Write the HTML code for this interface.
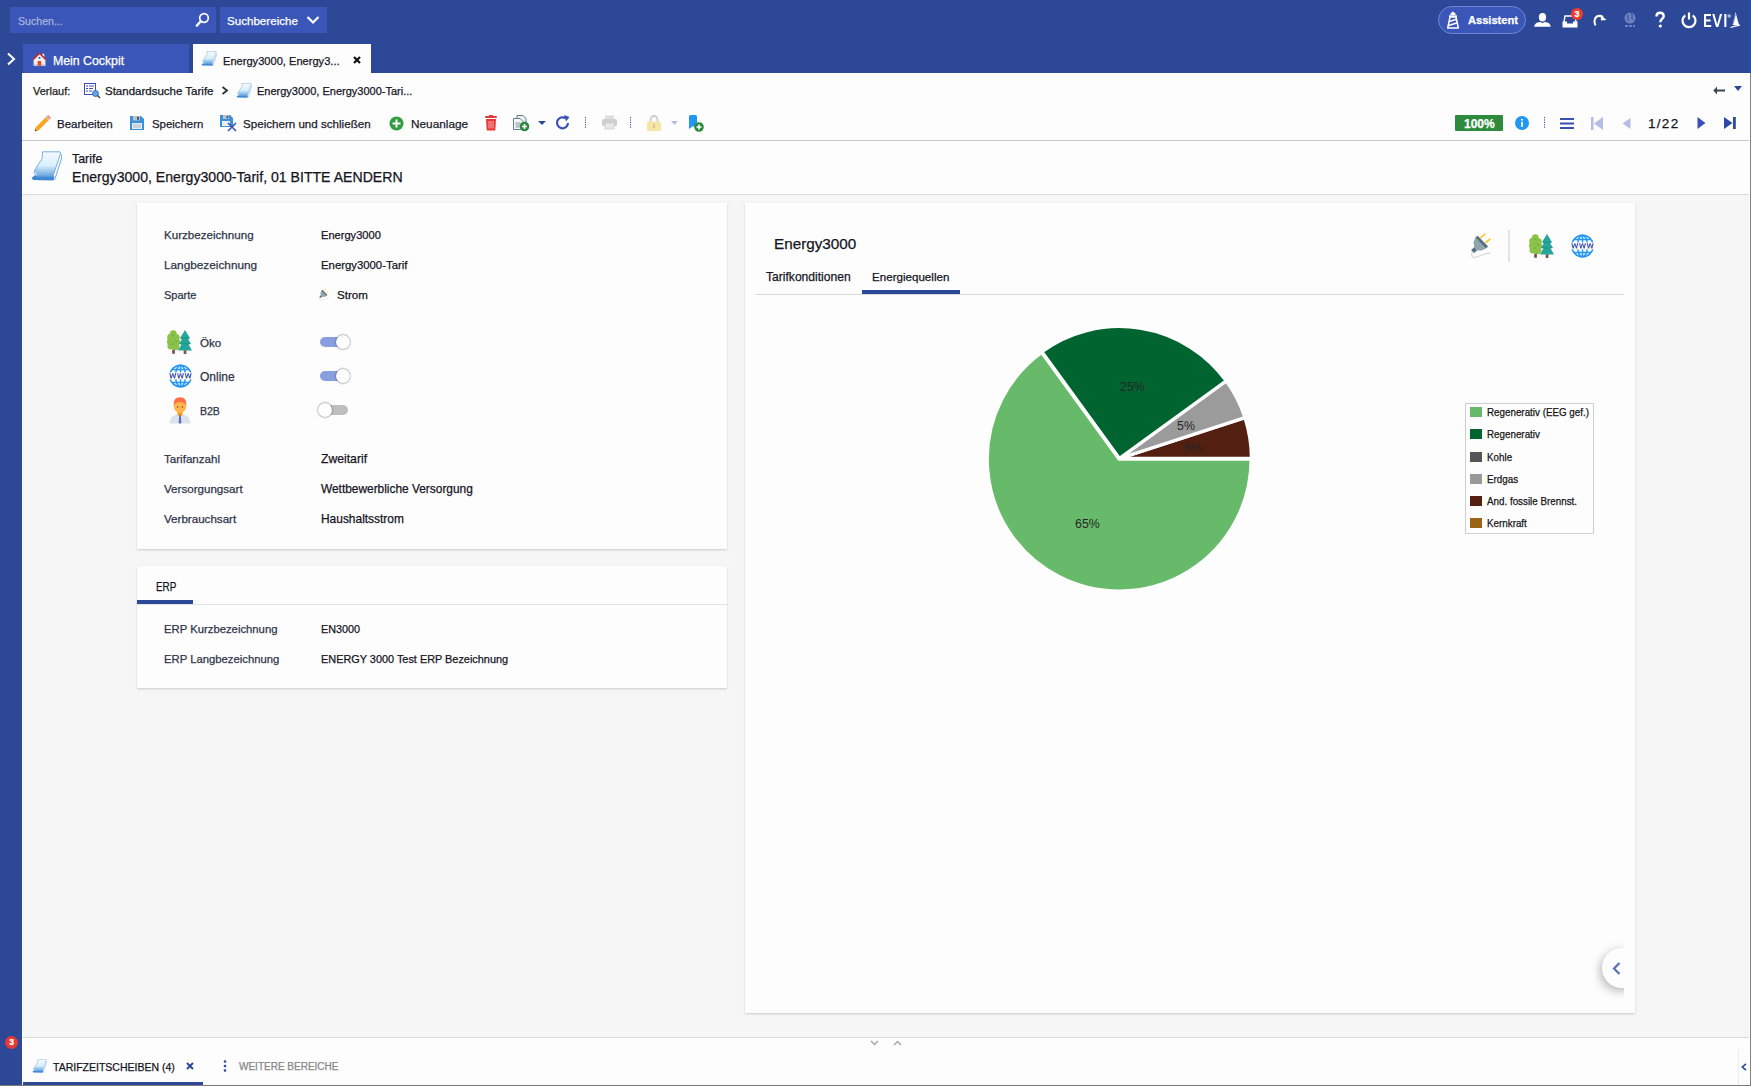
<!DOCTYPE html>
<html><head><meta charset="utf-8">
<style>
*{box-sizing:border-box;margin:0;padding:0}
html,body{width:1751px;height:1086px;overflow:hidden;background:#f6f6f6;font-family:"Liberation Sans",sans-serif;font-size:11.5px;color:#1b1b2b}
.a{position:absolute;white-space:nowrap;-webkit-text-stroke:0.25px currentColor}
svg{position:absolute;overflow:visible}
#hdr{position:absolute;left:0;top:0;width:1751px;height:73px;background:#2e4898}
#lstrip{position:absolute;left:0;top:73px;width:22px;height:1013px;background:#2e4898}
.lbl{color:#2f3549}
.val{color:#15151f}
.card{position:absolute;background:#fdfdfd;box-shadow:0 1px 2px rgba(0,0,0,0.18)}
</style></head><body>
<svg width="0" height="0" style="position:absolute;left:0;top:0"><defs>
<symbol id="trees" viewBox="0 0 25 24">
<g fill="#8bc34a"><circle cx="6.3" cy="3.6" r="3.4"/><circle cx="3.6" cy="7.2" r="3.4"/><circle cx="9.2" cy="7.4" r="3.5"/><circle cx="3.1" cy="11.6" r="3.2"/><circle cx="9.6" cy="12" r="3.5"/><circle cx="4" cy="16" r="3.6"/><circle cx="8.8" cy="16.4" r="3.6"/><circle cx="6.5" cy="10" r="4"/></g>
<path d="M5 5.5 Q6 4.5 7.2 5 M8 10 Q9.5 10.5 9.8 12 M5 15 Q5.5 13.8 7 13.6" fill="none" stroke="#689f38" stroke-width="0.9"/>
<rect x="5.2" y="19.6" width="2.7" height="4.2" fill="#795548"/>
<path d="M18 0 L23.2 8.5 H12.8 Z M18 3.5 L24 14 H12 Z M18 8 L25 20.5 H11 Z" fill="#26a69a"/>
<path d="M13.8 8.4 H22.2 M12.8 13.9 H23.2" stroke="#1e8e82" stroke-width="0.8"/>
<rect x="16.7" y="20.3" width="2.7" height="3.7" fill="#795548"/>
</symbol>
<symbol id="globe" viewBox="0 0 23 24">
<g fill="none" stroke="#2196f3" stroke-width="1.5"><circle cx="11.5" cy="12" r="10.8"/><ellipse cx="11.5" cy="12" rx="5" ry="10.8"/><path d="M11.5 1.2 V22.8 M3 5.6 H20 M3 18.4 H20"/></g>
<rect x="0" y="8.4" width="23" height="7" fill="#fdfdfd"/>
<path d="M0.3 9.2 L1.6 14.6 H2.7 L3.8 10.8 L4.9 14.6 H6 L7.3 9.2 H6.1 L5.4 12.6 L4.3 9.2 H3.3 L2.2 12.6 L1.5 9.2 Z" fill="#3f51b5" transform="translate(0,0)"/>
<path d="M0.3 9.2 L1.6 14.6 H2.7 L3.8 10.8 L4.9 14.6 H6 L7.3 9.2 H6.1 L5.4 12.6 L4.3 9.2 H3.3 L2.2 12.6 L1.5 9.2 Z" fill="#3f51b5" transform="translate(7.7,0)"/>
<path d="M0.3 9.2 L1.6 14.6 H2.7 L3.8 10.8 L4.9 14.6 H6 L7.3 9.2 H6.1 L5.4 12.6 L4.3 9.2 H3.3 L2.2 12.6 L1.5 9.2 Z" fill="#3f51b5" transform="translate(15.4,0)"/>
</symbol>
<symbol id="plug" viewBox="0 0 23 26">
<path d="M11.4 6 L16.4 1.8 M16.4 10.6 L21.4 6.8" stroke="#ffc107" stroke-width="1.5"/>
<path d="M6.4 5.6 L16.8 16.4 L12.6 18.5 L8 18.4 L5.3 15.3 L4.6 10.3 Z" fill="#90a4ae"/>
<path d="M6.4 5.6 L8.7 3.7 L19.1 14.5 L16.8 16.4 Z" fill="#546e7a"/>
<path d="M2.2 18 L5.3 15.3 L8 18.4 L4.9 21 Z" fill="#546e7a"/>
<path d="M3.4 20.4 C1.3 23.8 3.5 25.6 6.3 25.4 C9.5 25.2 14.5 21.2 21.4 20.8" fill="none" stroke="#cfd8dc" stroke-width="1.2"/>
</symbol>
<symbol id="doc" viewBox="5.5 5.5 31 30">
<defs><linearGradient id="pg2" x1="0" y1="0" x2="0" y2="1"><stop offset="0" stop-color="#f4f9ff"/><stop offset="0.55" stop-color="#d9f0fc"/><stop offset="1" stop-color="#62a0de"/></linearGradient></defs>
<path d="M35.6 9 Q36.8 10.5 36.2 12.5 L29.2 34.3" fill="none" stroke="#5b9ad6" stroke-width="0.9"/>
<path d="M6 32.4 L9.5 29.8 L28.8 30.8 L28 34.9 L7.6 34.6 Z" fill="#3f86d2"/>
<path d="M17 6.3 H34.4 Q35.4 7 34.9 8.7 L27.2 31.3 H12.6 Q10 30 9 27.2 L9.3 24.6 Q13 18.5 15.9 14.3 Q17.1 12.3 16.9 10 Z" fill="url(#pg2)" stroke="#5b9ad6" stroke-width="0.8"/>
<path d="M9.2 24.6 L12.6 31 Q9.6 30.2 8.6 27.6 Z" fill="#e9f4fd" stroke="#6aa6dc" stroke-width="0.6"/>
</symbol>
</defs></svg>
<div id="hdr"></div>
<div id="lstrip"></div>

<!-- search -->
<div class="a" style="left:10px;top:7px;width:206px;height:26px;background:#3a56b8"></div>
<div class="a" style="left:18px;top:15px;color:#a7b3dd;font-size:10.6px">Suchen...</div>
<svg style="left:194px;top:11px" width="16" height="17" viewBox="0 0 16 17"><circle cx="10" cy="7" r="4.3" fill="none" stroke="#fff" stroke-width="1.7"/><line x1="6.8" y1="10.3" x2="2.8" y2="14.6" stroke="#fff" stroke-width="2.3" stroke-linecap="round"/></svg>
<div class="a" style="left:220px;top:7px;width:107px;height:26px;background:#3a56b8"></div>
<div class="a" style="left:227px;top:14px;color:#fff;font-size:11.6px">Suchbereiche</div>
<svg style="left:306px;top:15px" width="14" height="10" viewBox="0 0 14 10"><polyline points="1.5,2 7,7.5 12.5,2" fill="none" stroke="#fff" stroke-width="2.2"/></svg>

<!-- right header icons -->
<div class="a" style="left:1438px;top:6px;width:88px;height:28px;border-radius:14px;background:#3a56b8;border:1px solid #6f86d2"></div>
<svg style="left:1447px;top:11px" width="12" height="18" viewBox="0 0 12 18"><path d="M6 0.5 L8.5 2.5 V4 H3.5 V2.5 Z" fill="#fff"/><rect x="2" y="4.3" width="8" height="1.6" fill="#fff"/><path d="M3 6 H9 L11.3 17 H0.7 Z" fill="none" stroke="#fff" stroke-width="1.5" stroke-linejoin="round"/><path d="M2.4 10.5 L9.6 8.3 M1.6 14.5 L10.4 11.8" stroke="#fff" stroke-width="1.5"/></svg>
<div class="a" style="left:1468px;top:14px;color:#fff;font-weight:bold;font-size:11.1px">Assistent</div>
<svg style="left:1534px;top:13px" width="17" height="14" viewBox="0 0 17 14"><ellipse cx="8.5" cy="4.2" rx="3.6" ry="4.2" fill="#fff"/><path d="M0.3 13.7 C0.5 10.5 3 9.5 6 9 L8.5 10 L11 9 C14 9.5 16.5 10.5 16.7 13.7 Z" fill="#fff"/></svg>
<svg style="left:1562px;top:15px" width="16" height="13" viewBox="0 0 16 13"><path d="M2 7 L3 1 H13 L14 7" fill="none" stroke="#fff" stroke-width="1.4"/><path d="M0.5 6.5 H5 V8.5 H11 V6.5 H15.5 V12.5 H0.5 Z" fill="#fff"/></svg>
<div class="a" style="left:1571px;top:8px;width:12px;height:12px;border-radius:6px;background:#f03c2e;color:#fff;font-size:9px;font-weight:bold;text-align:center;line-height:12px">3</div>
<svg style="left:1593px;top:13px" width="14" height="13" viewBox="0 0 14 13"><path d="M2.5 12.5 C0 8 2 3 6.5 2.8 C8 2.8 9 3.3 10 4" fill="none" stroke="#fff" stroke-width="2"/><path d="M7.5 1.5 L13.5 7 L8 7.5 Z" fill="#fff"/></svg>
<svg style="left:1624px;top:12px" width="12" height="16" viewBox="0 0 12 16"><circle cx="6" cy="6" r="5.5" fill="#6f80c0"/><path d="M3 2.5 Q5 4 4 6 Q3 7.5 5 9 M7 1 Q9 3 8 5 Q7 7 9 8" fill="none" stroke="#2e4898" stroke-width="1"/><path d="M1 14 H11" stroke="#6f80c0" stroke-width="2.2" stroke-dasharray="3,1"/></svg>
<svg style="left:1655px;top:12px" width="10" height="16" viewBox="0 0 10 16"><path d="M1.5 4.5 C1.5 1.8 3.3 0.8 5 0.8 C7 0.8 8.7 2 8.7 4.2 C8.7 6.8 5.3 7.2 5.3 10.2" fill="none" stroke="#fff" stroke-width="2.4"/><circle cx="5.3" cy="14" r="1.6" fill="#fff"/></svg>
<svg style="left:1681px;top:12px" width="16" height="16" viewBox="0 0 16 16"><path d="M4.3 3.3 A6.5 6.5 0 1 0 11.7 3.3" fill="none" stroke="#fff" stroke-width="2.2"/><line x1="8" y1="0.5" x2="8" y2="7.5" stroke="#fff" stroke-width="2.2"/></svg>
<svg style="left:1703.5px;top:14px" width="24" height="13" viewBox="0 0 24 13"><path d="M0 0 H7 V1.9 H2.1 V5.5 H6.6 V7.4 H2.1 V11.1 H7.2 V13 H0 Z" fill="#fff"/><path d="M8.2 0 H10.4 L13.2 10.2 L16 0 H18.2 L14.3 13 H12.1 Z" fill="#fff"/><rect x="20.3" y="0" width="2.1" height="13" fill="#fff"/></svg>
<svg style="left:1727px;top:11px" width="15" height="18" viewBox="0 0 15 18"><circle cx="2.2" cy="5" r="1.8" fill="#a9b6e4"/><path d="M8.5 1 L12 14 L5.5 14 Z" fill="#fff"/><path d="M8.5 3 L6 13 L5 14" fill="none" stroke="#2e4898" stroke-width="0.6"/><path d="M3.5 16.5 Q8 15 13 14.2" fill="none" stroke="#fff" stroke-width="1.3"/></svg>

<!-- tabs -->
<svg style="left:5px;top:52px" width="12" height="14" viewBox="0 0 12 14"><polyline points="3,1.5 9,7 3,12.5" fill="none" stroke="#fff" stroke-width="2.1"/></svg>
<div class="a" style="left:23px;top:44px;width:166px;height:29px;background:#3a56b8"></div>
<svg style="left:32.5px;top:52px" width="13" height="14" viewBox="0 0 13 14"><rect x="9.3" y="1.8" width="2" height="4" fill="#eef0f8"/><path d="M0.6 7 L6.5 1.2 L12.4 7 V13.8 H0.6 Z" fill="#eef0f8"/><path d="M0.3 7.4 L6.5 1.2 L12.7 7.4" fill="none" stroke="#c62828" stroke-width="1.5"/><rect x="5.7" y="5" width="1.6" height="1.6" fill="#0d47a1"/><rect x="0.6" y="12" width="11.8" height="1" fill="#c9cde8"/><rect x="4.6" y="9" width="3.6" height="4.8" fill="#e64a19"/></svg>
<div class="a" style="left:53px;top:54px;color:#fff;font-size:12.3px">Mein Cockpit</div>
<div class="a" style="left:193px;top:44px;width:178px;height:30px;background:#fdfdfd"></div>
<svg style="left:201px;top:51px" width="16" height="15"><use href="#doc"/></svg>
<div class="a" style="left:223px;top:55px;color:#15151f;font-size:11.1px">Energy3000, Energy3...</div>
<svg style="left:353px;top:56px" width="8" height="8" viewBox="0 0 8 8"><path d="M1 1 L7 7 M7 1 L1 7" stroke="#111" stroke-width="2.2"/></svg>

<!-- content white area -->
<div class="a" style="left:22px;top:73px;width:1727px;height:121px;background:#fdfdfd"></div>
<div class="a" style="left:22px;top:140px;width:1727px;height:1px;background:#c8c8c8"></div>
<div class="a" style="left:22px;top:194px;width:1727px;height:1px;background:#dcdcdc"></div>
<div class="a" style="left:1750px;top:73px;width:1px;height:1013px;background:#808080"></div>
<div class="a" style="left:1749px;top:73px;width:1px;height:1013px;background:#fdfdfd"></div>


<!-- BREADCRUMB -->
<div class="a" style="left:33px;top:85px;color:#222;font-size:11px">Verlauf:</div>
<svg style="left:84px;top:83px" width="17" height="16" viewBox="0 0 17 16"><rect x="0.5" y="0.5" width="11" height="11" fill="#fff" stroke="#3a4fb0" stroke-width="1"/><path d="M2 3h2M2 5.5h2M2 8h2M5 3h5M5 5.5h4M5 8h3" stroke="#3a4fb0" stroke-width="1"/><circle cx="11.5" cy="10.5" r="3" fill="#5aa9e6" stroke="#3a4fb0" stroke-width="0.8"/><line x1="13.5" y1="12.5" x2="16" y2="15" stroke="#333" stroke-width="1.2"/></svg>
<div class="a" style="left:105px;top:85px;color:#15151f;font-size:11.5px">Standardsuche Tarife</div>
<svg style="left:221px;top:86px" width="8" height="9" viewBox="0 0 8 9"><polyline points="1.5,1 6,4.5 1.5,8" fill="none" stroke="#263238" stroke-width="1.8"/></svg>
<svg style="left:236px;top:82.5px" width="16" height="15"><use href="#doc"/></svg>
<div class="a" style="left:257px;top:85px;color:#15151f;font-size:11px">Energy3000, Energy3000-Tari...</div>
<svg style="left:1713px;top:86px" width="13" height="9" viewBox="0 0 13 9"><path d="M12 4.5 H3" stroke="#37474f" stroke-width="2"/><path d="M4 0.5 L0.3 4.5 L4 8.5 Z" fill="#37474f"/></svg>
<svg style="left:1734px;top:86px" width="8" height="5" viewBox="0 0 8 5"><path d="M0 0 H8 L4 5 Z" fill="#2e4898"/></svg>

<!-- TOOLBAR -->
<svg style="left:33.5px;top:114.5px" width="17" height="17" viewBox="0 0 17 17"><path d="M0.8 16.2 L1.3 12.8 L12.5 1.6 L15.4 4.5 L4.2 15.7 Z" fill="#f5a623"/><path d="M12.5 1.6 L13.8 0.3 Q14.3 -0.1 14.8 0.3 L16.7 2.2 Q17.1 2.7 16.7 3.2 L15.4 4.5 Z" fill="#ef9a9a"/><path d="M11.8 2.3 L14.7 5.2" stroke="#cfd8dc" stroke-width="1"/><path d="M0.8 16.2 L1.1 14.2 L2.8 15.9 Z" fill="#37474f"/></svg>
<div class="a" style="left:57px;top:118px;font-size:11.5px">Bearbeiten</div>
<svg style="left:130px;top:116px" width="14" height="14" viewBox="0 0 14 14"><path d="M0 0 H11 L14 3 V14 H0 Z" fill="#3d8fd8"/><rect x="3" y="0" width="7" height="4.5" fill="#b8c4cc"/><rect x="7" y="0.8" width="2" height="3" fill="#3d5a80"/><rect x="2" y="7" width="10" height="6" fill="#e8eef5"/><path d="M3 9h8M3 11h8" stroke="#9ab" stroke-width="0.8"/></svg>
<div class="a" style="left:152px;top:118px;font-size:11.4px">Speichern</div>
<svg style="left:220px;top:115px" width="17" height="16" viewBox="0 0 17 16"><path d="M0 0 H10 L13 3 V12 H0 Z" fill="#3d8fd8"/><rect x="3" y="0" width="6" height="4" fill="#b8c4cc"/><rect x="6.5" y="0.8" width="1.8" height="2.6" fill="#3d5a80"/><rect x="2" y="6" width="8" height="5" fill="#e8eef5"/><path d="M8 8 L16 16 M16 8 L8 16" stroke="#3a4fb0" stroke-width="1.6"/></svg>
<div class="a" style="left:243px;top:117px;font-size:11.6px">Speichern und schließen</div>
<svg style="left:389px;top:116px" width="15" height="15" viewBox="0 0 15 15"><circle cx="7.5" cy="7.5" r="7" fill="#2e9e3e"/><path d="M7.5 3.5 V11.5 M3.5 7.5 H11.5" stroke="#fff" stroke-width="2"/></svg>
<div class="a" style="left:411px;top:117px;font-size:11.8px">Neuanlage</div>
<svg style="left:485px;top:115px" width="12" height="16" viewBox="0 0 12 16"><rect x="0" y="1" width="12" height="2" rx="1" fill="#e53935"/><rect x="4" y="0" width="4" height="2" fill="#e53935"/><path d="M1 4 H11 L10.3 15.5 H1.7 Z" fill="#e53935"/><path d="M4 6 V13.5 M6 6 V13.5 M8 6 V13.5" stroke="#fbb" stroke-width="0.9"/></svg>
<svg style="left:513px;top:115px" width="17" height="17" viewBox="0 0 17 17"><path d="M4 0.5 H10 L13 3.5 V11 H4 Z" fill="#eceff1" stroke="#607d8b" stroke-width="1"/><path d="M0.5 3.5 H7 L10 6.5 V14.5 H0.5 Z" fill="#f5f7f8" stroke="#607d8b" stroke-width="1"/><path d="M2.5 8h5M2.5 10h5M2.5 12h4" stroke="#607d8b" stroke-width="0.8"/><circle cx="11.5" cy="11.5" r="4.8" fill="#2e8b3e"/><path d="M11.5 9 V14 M9 11.5 H14" stroke="#fff" stroke-width="1.6"/></svg>
<svg style="left:538px;top:121px" width="8" height="4" viewBox="0 0 8 4"><path d="M0 0 H8 L4 4 Z" fill="#2e4898"/></svg>
<svg style="left:555px;top:115px" width="16" height="16" viewBox="0 0 16 16"><path d="M13 8 A5.5 5.5 0 1 1 10.5 3.2" fill="none" stroke="#3a50b8" stroke-width="2.2"/><path d="M9 0 L14.5 2 L11 6.5 Z" fill="#3a50b8"/></svg>
<svg style="left:585px;top:117px" width="1" height="12" viewBox="0 0 1 12"><path d="M0.5 0 V12" stroke="#3a4fb0" stroke-width="1" stroke-dasharray="1.2,1.2"/></svg>
<svg style="left:602px;top:115px" width="15" height="14" viewBox="0 0 15 14"><rect x="3" y="0.5" width="9" height="3.5" fill="#ddd"/><rect x="0" y="4" width="15" height="7" rx="1.5" fill="#cfcfcf"/><rect x="3" y="8" width="9" height="6" fill="#e8e8e8" stroke="#cfcfcf" stroke-width="0.8"/></svg>
<svg style="left:630px;top:117px" width="1" height="12" viewBox="0 0 1 12"><path d="M0.5 0 V12" stroke="#3a4fb0" stroke-width="1" stroke-dasharray="1.2,1.2"/></svg>
<svg style="left:647px;top:115px" width="14" height="16" viewBox="0 0 14 16"><path d="M3.5 7 V4.5 A3.5 3.5 0 0 1 10.5 4.5 V7" fill="none" stroke="#ccc" stroke-width="1.8"/><rect x="0" y="6.5" width="14" height="9.5" rx="1.5" fill="#f6e6a6"/><path d="M7 9 V13" stroke="#c9c0a0" stroke-width="1.6"/></svg>
<svg style="left:671px;top:121px" width="7" height="4" viewBox="0 0 7 4"><path d="M0 0 H7 L3.5 4 Z" fill="#b3bbe3"/></svg>
<svg style="left:689px;top:115px" width="15" height="17" viewBox="0 0 15 17"><path d="M0 1.5 A1.5 1.5 0 0 1 1.5 0 H6.5 A1.5 1.5 0 0 1 8 1.5 V14 L4 11 L0 14 Z" fill="#2196f3"/><circle cx="10" cy="12" r="4.8" fill="#2e8b3e"/><path d="M10 9.5 V14.5 M7.5 12 H12.5" stroke="#fff" stroke-width="1.6"/></svg>

<div class="a" style="left:1455px;top:115px;width:48px;height:16px;background:#2e8b3e;border-radius:1px"></div>
<div class="a" style="left:1464px;top:116.5px;color:#fff;font-weight:bold;font-size:12px">100%</div>
<svg style="left:1515px;top:116px" width="14" height="14" viewBox="0 0 14 14"><circle cx="7" cy="7" r="7" fill="#2196f3"/><rect x="6.1" y="5.8" width="1.8" height="5" fill="#fff"/><circle cx="7" cy="3.8" r="1" fill="#fff"/></svg>
<svg style="left:1544px;top:117px" width="1" height="12" viewBox="0 0 1 12"><path d="M0.5 0 V12" stroke="#3a4fb0" stroke-width="1" stroke-dasharray="1.2,1.2"/></svg>
<svg style="left:1560px;top:118px" width="14" height="11" viewBox="0 0 14 11"><path d="M0 1 H14 M0 5.5 H14 M0 10 H14" stroke="#3a50b0" stroke-width="2"/></svg>
<svg style="left:1591px;top:117px" width="12" height="13" viewBox="0 0 12 13"><rect x="0" y="0" width="2.5" height="13" fill="#b5bde5"/><path d="M12 0 V13 L3 6.5 Z" fill="#b5bde5"/></svg>
<svg style="left:1622px;top:118px" width="9" height="11" viewBox="0 0 9 11"><path d="M8.5 0 V11 L0.5 5.5 Z" fill="#b5bde5"/></svg>
<div class="a" style="left:1648px;top:116px;color:#15151f;font-size:13.5px;letter-spacing:1.3px">1/22</div>
<svg style="left:1697px;top:117px" width="9" height="12" viewBox="0 0 9 12"><path d="M0.5 0 V12 L8.5 6 Z" fill="#3a50b8"/></svg>
<svg style="left:1724px;top:117px" width="12" height="12" viewBox="0 0 12 12"><path d="M0 0 V12 L8.5 6 Z" fill="#2e48a8"/><rect x="9" y="0" width="2.8" height="12" fill="#2e48a8"/></svg>

<!-- TITLE -->
<svg style="left:30.5px;top:150.5px" width="31" height="30"><use href="#doc"/></svg>
<div class="a" style="left:72px;top:152px;color:#15151f;font-size:12.4px">Tarife</div>
<div class="a" style="left:72px;top:169px;color:#15151f;font-size:14.1px">Energy3000, Energy3000-Tarif, 01 BITTE AENDERN</div>


<!-- LEFT CARD -->
<div class="card" style="left:137px;top:203px;width:590px;height:346px"></div>
<div class="a lbl" style="left:164px;top:228px;font-size:11.6px">Kurzbezeichnung</div>
<div class="a val" style="left:321px;top:229px;font-size:11.1px">Energy3000</div>
<div class="a lbl" style="left:164px;top:258px;font-size:11.8px">Langbezeichnung</div>
<div class="a val" style="left:321px;top:259px;font-size:11.35px">Energy3000-Tarif</div>
<div class="a lbl" style="left:164px;top:289px;font-size:11.0px">Sparte</div>
<svg style="left:317.5px;top:287.5px" width="11.5" height="12.5" viewBox="0 0 23 26"><use href="#plug"/></svg>
<div class="a val" style="left:337px;top:288px;font-size:11.6px">Strom</div>

<svg style="left:167px;top:330px" width="25" height="24"><use href="#trees"/></svg>
<div class="a lbl" style="left:200px;top:336px;font-size:11.6px">Öko</div>
<div class="a" style="left:320px;top:337px;width:24px;height:10px;border-radius:5px;background:#889ede"></div>
<div class="a" style="left:335.5px;top:334.8px;width:14.5px;height:14.5px;border-radius:8px;background:#fff;box-shadow:0 0 1.6px 0.4px rgba(0,0,0,0.45)"></div>

<svg style="left:168.5px;top:363.7px" width="23" height="24"><use href="#globe"/></svg>
<div class="a lbl" style="left:200px;top:370px;font-size:12px">Online</div>
<div class="a" style="left:320px;top:371px;width:24px;height:10px;border-radius:5px;background:#889ede"></div>
<div class="a" style="left:335.5px;top:368.8px;width:14.5px;height:14.5px;border-radius:8px;background:#fff;box-shadow:0 0 1.6px 0.4px rgba(0,0,0,0.45)"></div>

<svg style="left:169px;top:396.5px" width="22" height="27" viewBox="0 0 22 27"><path d="M0.5 26.5 Q0.5 19.5 6 18 L11 17.5 L16 18 Q21.5 19.5 21.5 26.5 Z" fill="#dde3ea"/><rect x="8.5" y="14" width="5" height="4.5" fill="#ff9800"/><path d="M10.2 18 H11.8 L12.3 26 L11 26.8 L9.7 26 Z" fill="#5c6bc0"/><ellipse cx="11" cy="9.5" rx="6.2" ry="6.5" fill="#ffb74d"/><path d="M4.6 9.5 Q3.8 0.3 11 0.3 Q18.2 0.3 17.4 9.5 Q16.5 5 11 5.2 Q5.5 5 4.6 9.5 Z" fill="#ff7043"/><circle cx="8.6" cy="10" r="0.7" fill="#5d4037"/><circle cx="13.4" cy="10" r="0.7" fill="#5d4037"/></svg>
<div class="a lbl" style="left:200px;top:405px;font-size:10.5px">B2B</div>
<div class="a" style="left:320px;top:405px;width:28px;height:10px;border-radius:5px;background:#bdbdbd"></div>
<div class="a" style="left:317.8px;top:402.5px;width:14.5px;height:14.5px;border-radius:8px;background:#fff;box-shadow:0 0 1.6px 0.4px rgba(0,0,0,0.45)"></div>

<div class="a lbl" style="left:164px;top:452px;font-size:11.6px">Tarifanzahl</div>
<div class="a val" style="left:321px;top:452px;font-size:12.2px">Zweitarif</div>
<div class="a lbl" style="left:164px;top:482px;font-size:11.6px">Versorgungsart</div>
<div class="a val" style="left:321px;top:482px;font-size:11.9px">Wettbewerbliche Versorgung</div>
<div class="a lbl" style="left:164px;top:512px;font-size:11.6px">Verbrauchsart</div>
<div class="a val" style="left:321px;top:512px;font-size:11.95px">Haushaltsstrom</div>

<!-- ERP CARD -->
<div class="card" style="left:137px;top:566px;width:590px;height:122px"></div>
<div class="a val" style="left:155.5px;top:580px;font-size:12.4px;transform:scaleX(0.8);transform-origin:0 0">ERP</div>
<div class="a" style="left:137px;top:604px;width:590px;height:1px;background:#e3e3e3"></div>
<div class="a" style="left:137px;top:600px;width:56px;height:4px;background:#2e4898"></div>
<div class="a lbl" style="left:164px;top:623px;font-size:11.3px">ERP Kurzbezeichnung</div>
<div class="a val" style="left:321px;top:623px;font-size:10.8px">EN3000</div>
<div class="a lbl" style="left:164px;top:653px;font-size:11.3px">ERP Langbezeichnung</div>
<div class="a val" style="left:321px;top:653px;font-size:10.9px">ENERGY 3000 Test ERP Bezeichnung</div>

<!-- RIGHT CARD -->
<div class="card" style="left:745px;top:203px;width:890px;height:810px"></div>
<div class="a val" style="left:774px;top:235px;font-size:15.25px">Energy3000</div>
<svg style="left:1469px;top:232px" width="23" height="26"><use href="#plug"/></svg>
<div class="a" style="left:1508px;top:230px;width:2px;height:32px;background:#e4e4e4"></div>
<svg style="left:1529px;top:234px" width="25" height="24"><use href="#trees"/></svg>
<svg style="left:1570.6px;top:234px" width="23" height="24"><use href="#globe"/></svg>
<div class="a val" style="left:766px;top:270px;font-size:12.1px">Tarifkonditionen</div>
<div class="a val" style="left:872px;top:270px;font-size:11.6px">Energiequellen</div>
<div class="a" style="left:756px;top:294px;width:868px;height:1px;background:#d6d6d6"></div>
<div class="a" style="left:862px;top:290px;width:98px;height:4px;background:#2e4898"></div>

<!-- PIE -->
<svg style="left:0;top:0" width="1751" height="1086" viewBox="0 0 1751 1086"><path d="M1119.50,458.40 L1251.40,458.40 A131.9,131.9 0 0 0 1244.94,417.64 Z" fill="#531f10" stroke="#fdfdfd" stroke-width="3.2" stroke-linejoin="miter"/><path d="M1119.50,458.40 L1244.94,417.64 A131.9,131.9 0 0 0 1226.21,380.87 Z" fill="#9b9b9b" stroke="#fdfdfd" stroke-width="3.2" stroke-linejoin="miter"/><path d="M1119.50,458.40 L1226.21,380.87 A131.9,131.9 0 0 0 1041.97,351.69 Z" fill="#006430" stroke="#fdfdfd" stroke-width="3.2" stroke-linejoin="miter"/><path d="M1119.20,459.20 L1041.67,352.49 A131.9,131.9 0 1 0 1251.10,459.20 Z" fill="#67ba6a" stroke="#fdfdfd" stroke-width="3.2" stroke-linejoin="miter"/><text x="1132.4" y="391.3" text-anchor="middle" font-family="Liberation Sans" font-size="12.3" fill="#262626">25%</text><text x="1186" y="429.9" text-anchor="middle" font-family="Liberation Sans" font-size="12.3" fill="#262626">5%</text><text x="1193.2" y="452.0" text-anchor="middle" font-family="Liberation Sans" font-size="12.3" fill="#262626">5%</text><text x="1087.4" y="528.0" text-anchor="middle" font-family="Liberation Sans" font-size="12.3" fill="#262626">65%</text></svg>
<div class="a" style="left:1465px;top:403px;width:129px;height:131px;border:1px solid #cfcfcf;background:#fdfdfd"></div>
<div class="a" style="left:1470px;top:407px;width:12px;height:10px;background:#67ba6a"></div>
<div class="a" style="left:1487px;top:406px;font-size:11px;color:#151515;transform:scaleX(0.892);transform-origin:0 0">Regenerativ (EEG gef.)</div>
<div class="a" style="left:1470px;top:429px;width:12px;height:10px;background:#006430"></div>
<div class="a" style="left:1487px;top:428px;font-size:11px;color:#151515;transform:scaleX(0.892);transform-origin:0 0">Regenerativ</div>
<div class="a" style="left:1470px;top:452px;width:12px;height:10px;background:#555555"></div>
<div class="a" style="left:1487px;top:451px;font-size:11px;color:#151515;transform:scaleX(0.892);transform-origin:0 0">Kohle</div>
<div class="a" style="left:1470px;top:474px;width:12px;height:10px;background:#999999"></div>
<div class="a" style="left:1487px;top:473px;font-size:11px;color:#151515;transform:scaleX(0.892);transform-origin:0 0">Erdgas</div>
<div class="a" style="left:1470px;top:496px;width:12px;height:10px;background:#531f10"></div>
<div class="a" style="left:1487px;top:495px;font-size:11px;color:#151515;transform:scaleX(0.892);transform-origin:0 0">And. fossile Brennst.</div>
<div class="a" style="left:1470px;top:518px;width:12px;height:10px;background:#9a6414"></div>
<div class="a" style="left:1487px;top:517px;font-size:11px;color:#151515;transform:scaleX(0.892);transform-origin:0 0">Kernkraft</div>
<div class="a" style="left:1560px;top:920px;width:64px;height:100px;overflow:hidden"><div class="a" style="left:42px;top:28px;width:40px;height:40px;border-radius:20px;background:#fdfdfd;box-shadow:-2px 3px 10px rgba(0,0,0,0.28)"></div></div>
<svg style="left:1612px;top:962px" width="9" height="13" viewBox="0 0 9 13"><polyline points="7.5,1 2,6.5 7.5,12" fill="none" stroke="#5a70bd" stroke-width="2.2"/></svg>
<!-- BOTTOM BAR -->
<div class="a" style="left:22px;top:1037px;width:1727px;height:1px;background:#dcdcdc"></div>
<div class="a" style="left:22px;top:1038px;width:1727px;height:48px;background:#fdfdfd"></div>
<svg style="left:870px;top:1040px" width="9" height="6" viewBox="0 0 9 6"><polyline points="1,1 4.5,4.5 8,1" fill="none" stroke="#a8a8a8" stroke-width="1.5"/></svg>
<svg style="left:893px;top:1040px" width="9" height="6" viewBox="0 0 9 6"><polyline points="1,5 4.5,1.5 8,5" fill="none" stroke="#a8a8a8" stroke-width="1.5"/></svg>
<div class="a" style="left:5px;top:1036px;width:13px;height:13px;border-radius:7px;background:#e53935;color:#fff;font-size:8.5px;font-weight:bold;text-align:center;line-height:13px">3</div>
<svg style="left:31.5px;top:1059px" width="15" height="14"><use href="#doc"/></svg>
<div class="a val" style="left:53px;top:1061px;font-size:10.5px">TARIFZEITSCHEIBEN (4)</div>
<svg style="left:186px;top:1062px" width="8" height="8" viewBox="0 0 8 8"><path d="M1 1 L7 7 M7 1 L1 7" stroke="#2e4898" stroke-width="2"/></svg>
<svg style="left:223px;top:1060px" width="4" height="12" viewBox="0 0 4 12"><circle cx="2" cy="1.5" r="1.3" fill="#2e4898"/><circle cx="2" cy="6" r="1.3" fill="#2e4898"/><circle cx="2" cy="10.5" r="1.3" fill="#2e4898"/></svg>
<div class="a" style="left:239px;top:1061px;font-size:10px;color:#888">WEITERE BEREICHE</div>
<div class="a" style="left:23px;top:1082px;width:180px;height:4px;background:#2e4898"></div>
<div class="a" style="left:1738px;top:1049px;width:1px;height:37px;background:#ececec"></div>
<svg style="left:1741px;top:1063px" width="6" height="8" viewBox="0 0 6 8"><polyline points="5,0.8 1.3,4 5,7.2" fill="none" stroke="#2e4898" stroke-width="1.6"/></svg>
<div class="a" style="left:0;top:1085px;width:1751px;height:1px;background:#7a7a7a"></div>
</body></html>
